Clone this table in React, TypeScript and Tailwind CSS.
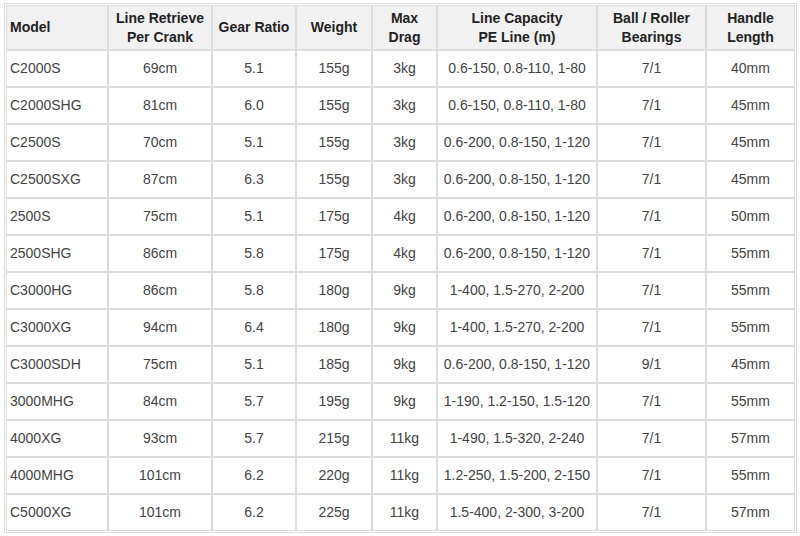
import React from "react";

const headers: string[][] = [
  ["Model"],
  ["Line Retrieve", "Per Crank"],
  ["Gear Ratio"],
  ["Weight"],
  ["Max", "Drag"],
  ["Line Capacity", "PE Line (m)"],
  ["Ball / Roller", "Bearings"],
  ["Handle", "Length"],
];

const widths = [102, 104, 84, 76, 65, 160, 109, 89];

const rows: string[][] = [
  ["C2000S", "69cm", "5.1", "155g", "3kg", "0.6-150, 0.8-110, 1-80", "7/1", "40mm"],
  ["C2000SHG", "81cm", "6.0", "155g", "3kg", "0.6-150, 0.8-110, 1-80", "7/1", "45mm"],
  ["C2500S", "70cm", "5.1", "155g", "3kg", "0.6-200, 0.8-150, 1-120", "7/1", "45mm"],
  ["C2500SXG", "87cm", "6.3", "155g", "3kg", "0.6-200, 0.8-150, 1-120", "7/1", "45mm"],
  ["2500S", "75cm", "5.1", "175g", "4kg", "0.6-200, 0.8-150, 1-120", "7/1", "50mm"],
  ["2500SHG", "86cm", "5.8", "175g", "4kg", "0.6-200, 0.8-150, 1-120", "7/1", "55mm"],
  ["C3000HG", "86cm", "5.8", "180g", "9kg", "1-400, 1.5-270, 2-200", "7/1", "55mm"],
  ["C3000XG", "94cm", "6.4", "180g", "9kg", "1-400, 1.5-270, 2-200", "7/1", "55mm"],
  ["C3000SDH", "75cm", "5.1", "185g", "9kg", "0.6-200, 0.8-150, 1-120", "9/1", "45mm"],
  ["3000MHG", "84cm", "5.7", "195g", "9kg", "1-190, 1.2-150, 1.5-120", "7/1", "55mm"],
  ["4000XG", "93cm", "5.7", "215g", "11kg", "1-490, 1.5-320, 2-240", "7/1", "57mm"],
  ["4000MHG", "101cm", "6.2", "220g", "11kg", "1.2-250, 1.5-200, 2-150", "7/1", "55mm"],
  ["C5000XG", "101cm", "6.2", "225g", "11kg", "1.5-400, 2-300, 3-200", "7/1", "57mm"],
];

export default function App() {
  return (
    <div
      className="w-[800px] h-[536px] bg-white pt-[3px] pl-[4px]"
      style={{ fontFamily: '"Liberation Sans", Arial, sans-serif' }}
    >
      <div className="w-[793px] border border-[#dcdcdc] p-[1px]">
        <table className="w-full table-fixed border-separate border-spacing-0 text-[14px]">
          <colgroup>
            {widths.map((w, i) => (
              <col key={i} style={{ width: w }} />
            ))}
          </colgroup>
          <thead>
            <tr className="h-[45px] bg-[#f1f1f1]">
              {headers.map((h, i) => (
                <th
                  key={i}
                  className={`border border-[#dcdcdc] font-bold text-[#222] leading-[19px] p-0 ${
                    i === 0 ? "text-left pl-[3px]" : "text-center"
                  }`}
                >
                  {h.map((line, j) => (
                    <div key={j}>{line}</div>
                  ))}
                </th>
              ))}
            </tr>
          </thead>
          <tbody>
            {rows.map((r, ri) => (
              <tr key={ri} className="h-[37px]">
                {r.map((c, ci) => (
                  <td
                    key={ci}
                    className={`border border-[#dcdcdc] text-[#444] p-0 whitespace-nowrap ${
                      ci === 0 ? "text-left pl-[3px]" : "text-center"
                    }`}
                  >
                    {c}
                  </td>
                ))}
              </tr>
            ))}
          </tbody>
        </table>
      </div>
    </div>
  );
}
